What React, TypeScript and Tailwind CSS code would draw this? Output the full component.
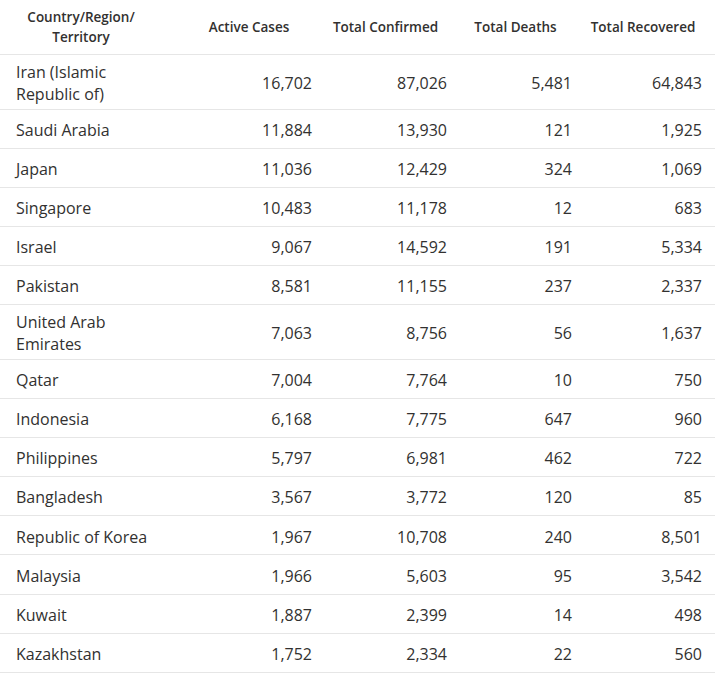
import React from "react";

const rows: [string, string, string, string, string][] = [
  ["Iran (Islamic Republic of)", "16,702", "87,026", "5,481", "64,843"],
  ["Saudi Arabia", "11,884", "13,930", "121", "1,925"],
  ["Japan", "11,036", "12,429", "324", "1,069"],
  ["Singapore", "10,483", "11,178", "12", "683"],
  ["Israel", "9,067", "14,592", "191", "5,334"],
  ["Pakistan", "8,581", "11,155", "237", "2,337"],
  ["United Arab Emirates", "7,063", "8,756", "56", "1,637"],
  ["Qatar", "7,004", "7,764", "10", "750"],
  ["Indonesia", "6,168", "7,775", "647", "960"],
  ["Philippines", "5,797", "6,981", "462", "722"],
  ["Bangladesh", "3,567", "3,772", "120", "85"],
  ["Republic of Korea", "1,967", "10,708", "240", "8,501"],
  ["Malaysia", "1,966", "5,603", "95", "3,542"],
  ["Kuwait", "1,887", "2,399", "14", "498"],
  ["Kazakhstan", "1,752", "2,334", "22", "560"],
];

export default function App() {
  return (
    <div
      className="w-[715px] bg-white text-[#323130]"
      style={{ fontFamily: '"Open Sans", "Noto Sans", sans-serif' }}
    >
      <div className="grid grid-cols-[187px_138px_135px_125px_130px] h-[55px] border-b border-[#e6e6e6] items-center text-[13.5px] font-semibold leading-[20px] text-[#323130]">
        <div className="w-[162px] text-center">
          Country/Region/
          <br />
          Territory
        </div>
        <div className="text-center pr-[14px]">Active Cases</div>
        <div className="text-center pr-[14px]">Total Confirmed</div>
        <div className="text-center pr-[14px]">Total Deaths</div>
        <div className="text-center pr-[14px]">Total Recovered</div>
      </div>
      {rows.map((r) => (
        <div
          key={r[0]}
          className="grid grid-cols-[187px_138px_135px_125px_130px] min-h-[39.15px] border-b border-[#e6e6e6] items-center pt-[6px] pb-[3.5px] text-[16px] leading-[22px]"
        >
          <div className="pl-[16px] pr-[24px]">{r[0]}</div>
          <div className="text-right pr-[13px]">{r[1]}</div>
          <div className="text-right pr-[13px]">{r[2]}</div>
          <div className="text-right pr-[13px]">{r[3]}</div>
          <div className="text-right pr-[13px]">{r[4]}</div>
        </div>
      ))}
    </div>
  );
}
